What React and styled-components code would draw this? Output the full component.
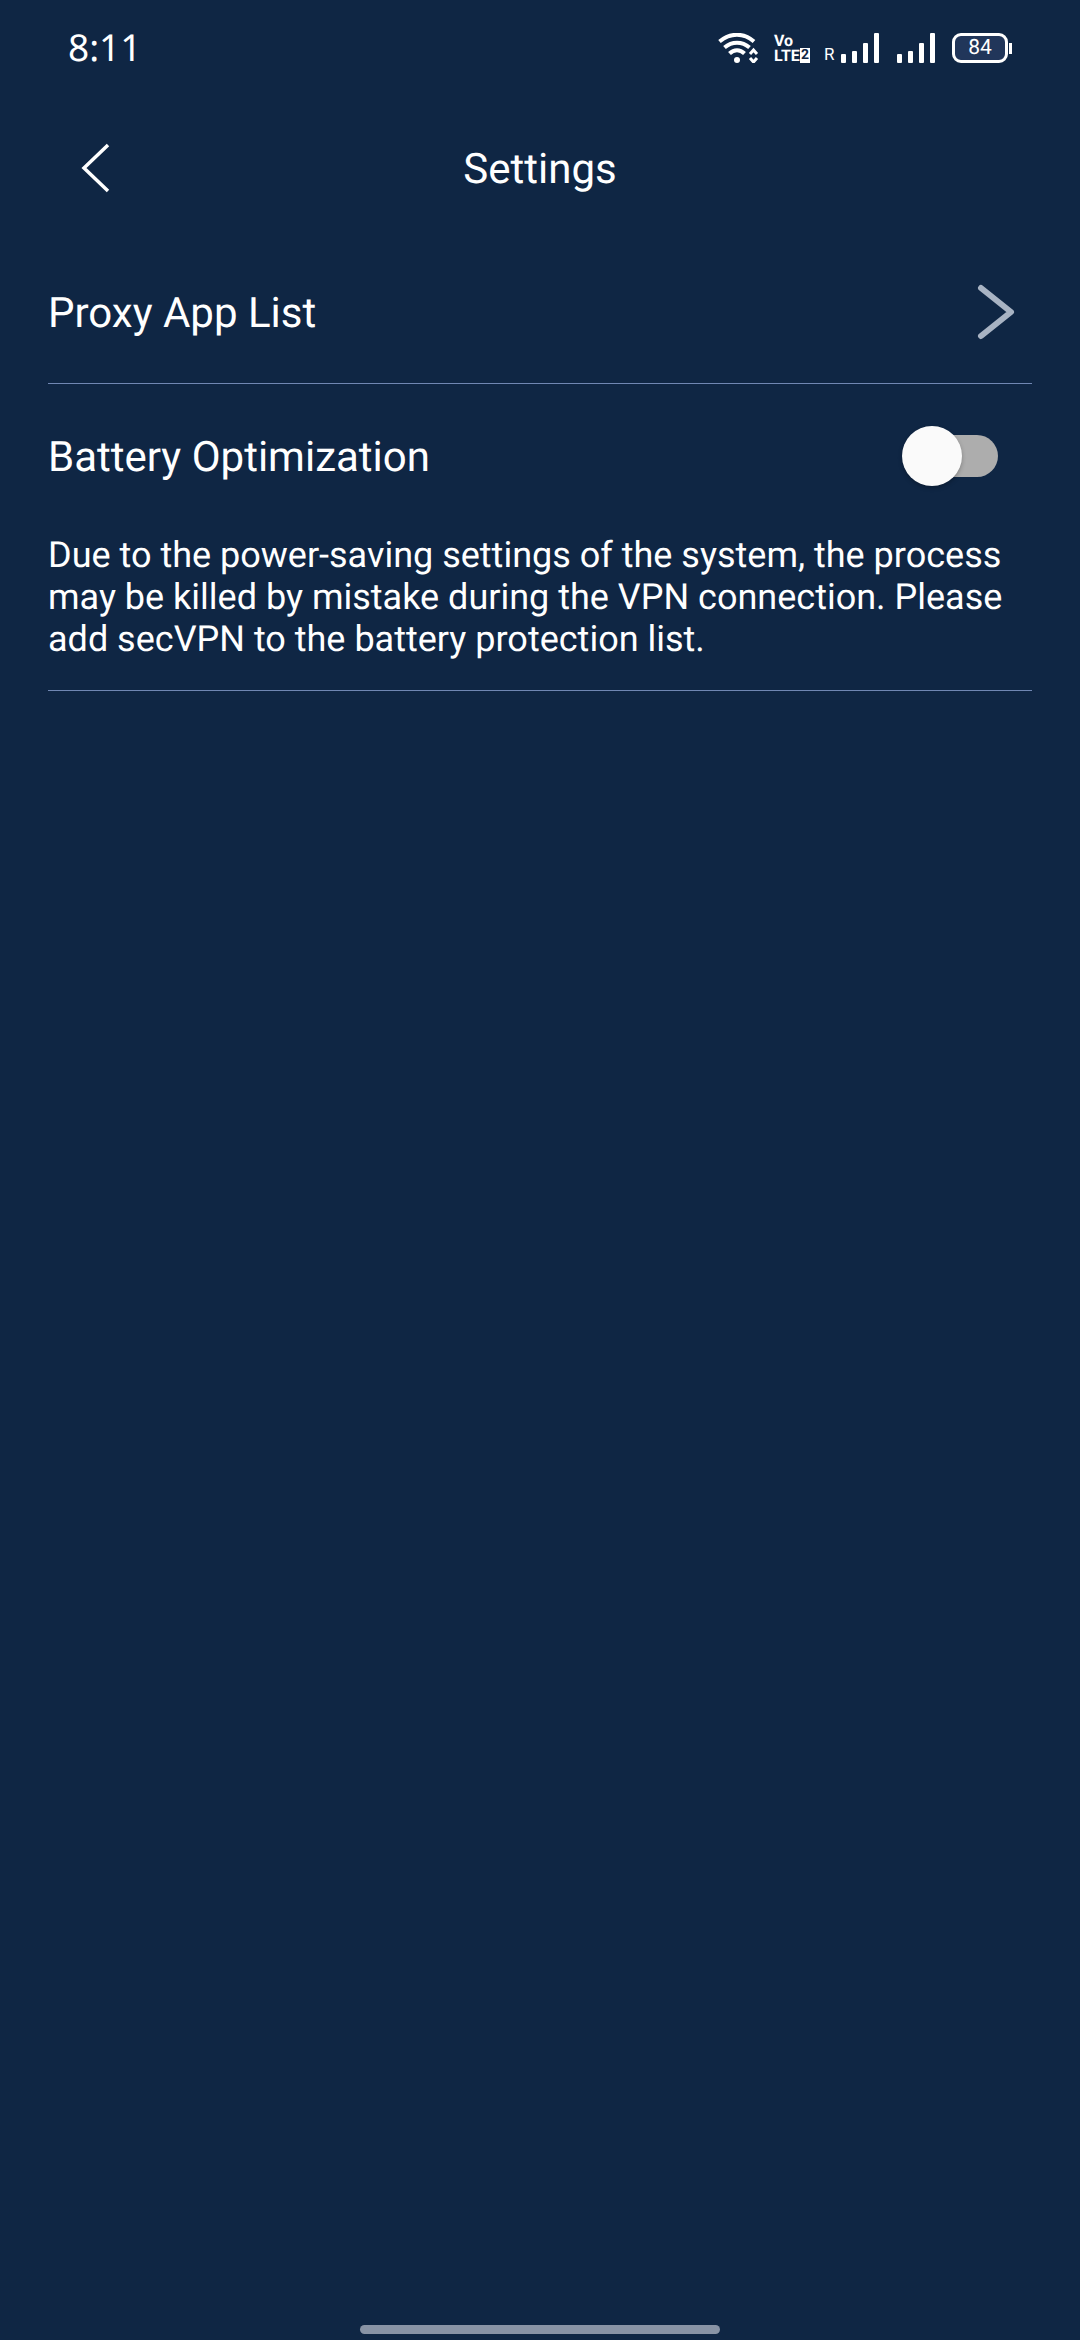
import React, { useState } from 'react';
import styled, { createGlobalStyle } from 'styled-components';

const GlobalStyle = createGlobalStyle`
  * {
    box-sizing: border-box;
  }

  body {
    margin: 0;
    background-color: #0f2644;
    color: #fff;
    font-family: Roboto, 'Liberation Sans', sans-serif;
    text-rendering: geometricPrecision;
  }
`;

const Screen = styled.div`
  display: flex;
  flex-direction: column;
  min-height: 100vh;
`;

const StatusBar = styled.div`
  display: flex;
  align-items: center;
  justify-content: space-between;
  height: 96px;
  padding: 0 68px;
`;

const Time = styled.time`
  padding-bottom: 2px;
  font-family: 'Noto Sans', sans-serif;
  font-size: 37px;
  line-height: 48px;
`;

const StatusIcons = styled.div`
  display: flex;
  align-items: center;
  gap: 14px;
`;

const Icon = styled.svg`
  display: block;
  flex-shrink: 0;
`;

const VoLte = styled.div`
  width: 36px;
  font-family: 'Liberation Sans Narrow', Roboto, sans-serif;
  font-size: 16px;
  font-weight: 700;
  line-height: 15px;
`;

const VoLteRow = styled.div`
  display: flex;
  align-items: center;
  justify-content: space-between;
`;

const SimBadge = styled.span`
  flex-shrink: 0;
  width: 10px;
  background-color: #fff;
  color: #0f2644;
  font-size: 14px;
  text-align: center;
`;

const Roaming = styled.div`
  display: flex;
  align-items: flex-end;
  gap: 6px;
`;

const RoamingLabel = styled.span`
  width: 10px;
  font-size: 17px;
  line-height: 16px;
`;

const Battery = styled.div`
  display: flex;
  align-items: center;
  width: 60px;
`;

const BatteryBody = styled.div`
  display: flex;
  align-items: center;
  justify-content: center;
  width: 56px;
  height: 30px;
  border: 3px solid #fff;
  border-radius: 9px;
  background-color: #21365a;
  font-size: 21px;
  line-height: 24px;
`;

const BatteryTip = styled.div`
  width: 3px;
  height: 11px;
  margin-left: 1px;
  background-color: #fff;
`;

const Header = styled.header`
  display: grid;
  grid-template-columns: 96px 1fr 96px;
  align-items: center;
  height: 144px;
  padding: 0 48px;
`;

const BackButton = styled.button`
  display: flex;
  align-items: center;
  justify-content: center;
  width: 96px;
  height: 96px;
  padding: 0;
  border: none;
  background: none;
  color: #fff;
  cursor: pointer;
`;

const Title = styled.h1`
  margin: 0;
  padding-top: 4px;
  font-size: 42px;
  font-weight: 400;
  line-height: 48px;
  text-align: center;
`;

const List = styled.main`
  flex: 1;
  padding: 0 48px;
`;

const Section = styled.section`
  border-bottom: 1px solid #7087b3;
`;

const rowStyles = `
  display: flex;
  align-items: center;
  justify-content: space-between;
  width: 100%;
  height: 143px;
  color: #fff;
  font-size: 42px;
  line-height: 48px;
  cursor: pointer;
`;

const RowLink = styled.a`
  ${rowStyles}
  padding-right: 16px;
  text-decoration: none;
`;

const RowLabel = styled.label`
  ${rowStyles}
  padding-right: 34px;
`;

const RowText = styled.span`
  padding-top: 4px;
`;

const Switch = styled.input`
  appearance: none;
  display: flex;
  align-items: center;
  width: 86px;
  height: 42px;
  margin: 0;
  border-radius: 21px;
  background-color: ${({ checked }) => (checked ? '#4f8df5' : '#adadad')};
  cursor: pointer;

  &::before {
    content: '';
    flex-shrink: 0;
    width: 60px;
    height: 60px;
    margin-left: ${({ checked }) => (checked ? '36px' : '-10px')};
    border-radius: 50%;
    background-color: #fafafa;
    box-shadow: 0 2px 4px rgba(0, 0, 0, 0.25);
  }
`;

const Description = styled.p`
  margin: 0;
  padding: 7px 0 30px;
  font-size: 36px;
  line-height: 42px;
`;

const HomeBar = styled.div`
  align-self: center;
  width: 33.33%;
  height: 9px;
  margin-bottom: 6px;
  border-radius: 5px;
  background-color: #8893a5;
`;

const SignalIcon = () => (
  <Icon width="42" height="30" viewBox="0 0 42 30" fill="#fff">
    <rect x="1" y="21" width="5" height="9" rx="1" />
    <rect x="12" y="18" width="5" height="12" rx="1" />
    <rect x="23" y="10" width="5" height="20" rx="1" />
    <rect x="34" y="0" width="5" height="30" rx="1" />
  </Icon>
);

const WifiIcon = () => (
  <Icon width="42" height="30" viewBox="0 0 42 30" fill="none" stroke="#fff">
    <path d="M1.5 8.5C12.5 -.5 25.5 -.5 36 8.5" strokeWidth="4" />
    <path d="M6.5 14.5C14 8 24 8 31.5 14.5" strokeWidth="4" />
    <path d="M11.5 20.5C16 16 22 16 26.5 20.5" strokeWidth="4" />
    <circle cx="19" cy="27" r="3" fill="#fff" stroke="none" />
    <path d="M32 21l3.500 -4 3.500 4M32 25l3.500 4 3.500 -4" strokeWidth="3" />
  </Icon>
);

const App = () => {
  const [optimized, setOptimized] = useState(false);

  return (
    <>
      <GlobalStyle />
      <Screen>
        <StatusBar>
          <Time>8:11</Time>
          <StatusIcons>
            <WifiIcon />
            <VoLte>
              <div>Vo</div>
              <VoLteRow>
                LTE<SimBadge>2</SimBadge>
              </VoLteRow>
            </VoLte>
            <Roaming>
              <RoamingLabel>R</RoamingLabel>
              <SignalIcon />
            </Roaming>
            <SignalIcon />
            <Battery>
              <BatteryBody>84</BatteryBody>
              <BatteryTip />
            </Battery>
          </StatusIcons>
        </StatusBar>

        <Header>
          <BackButton type="button" aria-label="Back">
            <Icon width="30" height="50" viewBox="0 0 30 50" fill="none" stroke="currentColor" strokeWidth="3.5">
              <path d="M27 2L3 25l24 23" />
            </Icon>
          </BackButton>
          <Title>Settings</Title>
        </Header>

        <List>
          <Section>
            <RowLink href="#proxy-apps">
              <RowText>Proxy App List</RowText>
              <Icon width="40" height="56" viewBox="0 0 40 56" fill="none" stroke="#a8b3c3" strokeWidth="6" strokeLinecap="round" strokeLinejoin="round">
                <path d="M5 4l30 24L5 52" />
              </Icon>
            </RowLink>
          </Section>
          <Section>
            <RowLabel htmlFor="battery-optimization">
              <RowText>Battery Optimization</RowText>
              <Switch
                id="battery-optimization"
                type="checkbox"
                role="switch"
                checked={optimized}
                onChange={(e) => setOptimized(e.target.checked)}
              />
            </RowLabel>
            <Description>
              Due to the power-saving settings of the system, the process may be killed by mistake
              during the VPN connection. Please add secVPN to the battery protection list.
            </Description>
          </Section>
        </List>

        <HomeBar />
      </Screen>
    </>
  );
};

export default App;
